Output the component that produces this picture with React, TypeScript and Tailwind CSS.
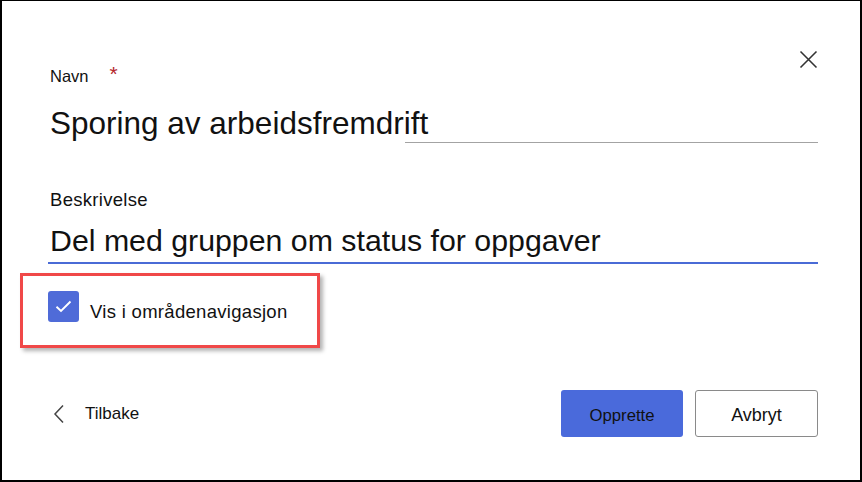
import React from "react";

export default function App() {
  return (
    <div className="w-[862px] h-[482px] box-border border-black border-t border-l-2 border-r-2 border-b-2 bg-white relative font-['Liberation_Sans',Arial,sans-serif] text-[#111]">
      <button className="absolute left-[794px] top-[46px] w-[24px] h-[24px] flex items-center justify-center">
        <svg width="19" height="19" viewBox="0 0 19 19" fill="none">
          <path d="M1.5 1.5 L17.5 17.5 M17.5 1.5 L1.5 17.5" stroke="#333" strokeWidth="1.6" />
        </svg>
      </button>
      <div className="flex flex-col pl-[46px] pr-[42px] pt-[65px]">
        <div className="flex items-start h-[20px]">
          <span className="ml-[2px] text-[16.5px] leading-[20px]">Navn</span>
          <span className="ml-[21px] -mt-[2px] text-[21px] leading-[20px] text-[#b4262c]">*</span>
        </div>
        <div className="mt-[17px] h-[39px] ml-[2px] text-[31.5px] leading-[40px] whitespace-nowrap">Sporing av arbeidsfremdrift</div>
        <div className="ml-[357px] h-px bg-[#a3a3a3]" />
        <div className="mt-[46px] ml-[2px] text-[18.5px] leading-[21px] tracking-[0.3px]">Beskrivelse</div>
        <div className="mt-[13px] ml-[2px] text-[30.3px] leading-[36px] whitespace-nowrap">Del med gruppen om status for oppgaver</div>
        <div className="mt-[3px] h-[2px] bg-[#4a6bd6]" />
        <div className="mt-[9px] -ml-[28px] w-[300px] h-[75px] box-border border-[3px] border-[#f04848] shadow-[3px_3px_4px_rgba(0,0,0,0.3)] flex items-start pl-[25px] pt-[15px]">
          <div className="w-[31px] h-[31px] rounded-[3px] bg-[#4f6bd8] flex items-center justify-center">
            <svg width="17" height="13" viewBox="0 0 17 13" fill="none">
              <path d="M1.5 6.8 L6 11 L15.5 1.5" stroke="white" strokeWidth="1.9" />
            </svg>
          </div>
          <span className="ml-[11px] mt-[10px] text-[18.5px] leading-[21px] tracking-[0.3px]">Vis i områdenavigasjon</span>
        </div>
        <div className="mt-[42px] flex items-center">
          <div className="flex items-center">
            <svg width="14" height="20" viewBox="0 0 14 20" fill="none" className="ml-[5px]">
              <path d="M10 1.5 L2 10 L10 18.5" stroke="#444" strokeWidth="1.5" />
            </svg>
            <span className="ml-[18px] mt-[1px] text-[17px] leading-[20px]">Tilbake</span>
          </div>
          <div className="ml-auto flex gap-[12px]">
            <button className="w-[122px] h-[47px] pt-[4px] rounded-[3px] bg-[#4a6adb] text-[16.7px] text-[#111]">Opprette</button>
            <button className="w-[123px] h-[47px] pt-[4px] rounded-[3px] border border-[#8a8a8a] bg-white text-[18px] text-[#111]">Avbryt</button>
          </div>
        </div>
      </div>
    </div>
  );
}
